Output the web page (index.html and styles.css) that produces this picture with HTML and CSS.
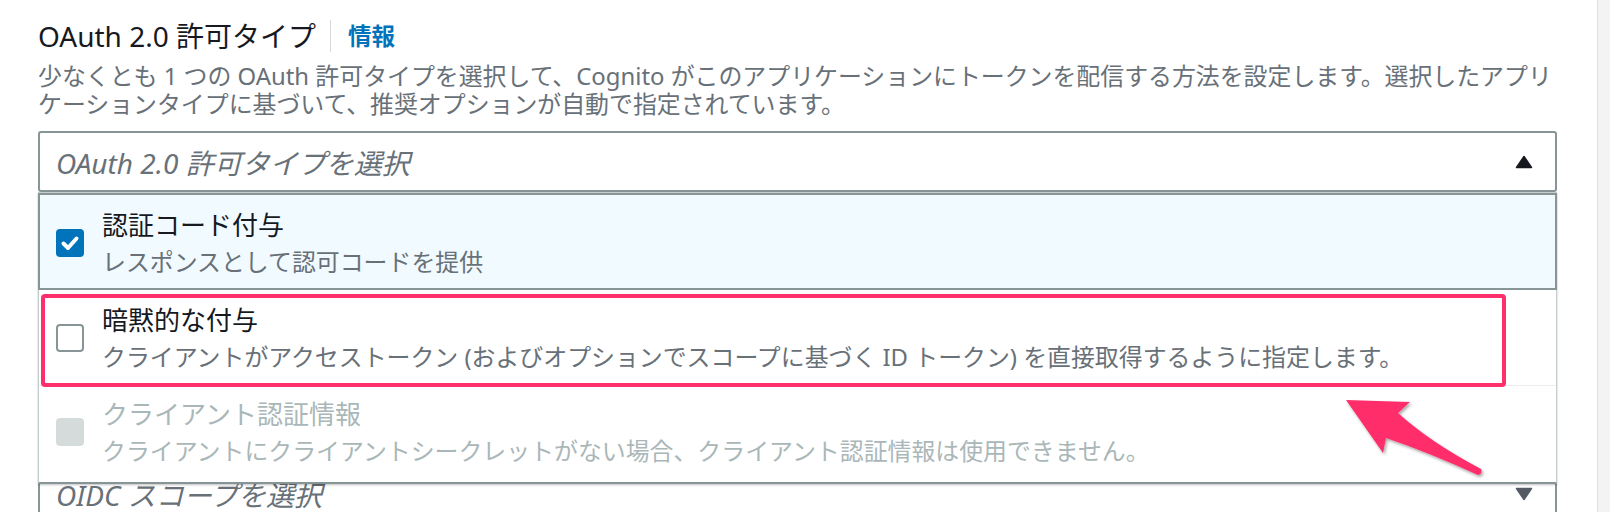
FILE: index.html
```html
<!DOCTYPE html>
<html lang="ja">
<head>
<meta charset="utf-8">
<title>OAuth 2.0 許可タイプ</title>
<link rel="stylesheet" href="styles.css">
</head>
<body>
<div class="page">
  <main class="content">
    <div class="label-row">
      <span class="title">OAuth 2.0 許可タイプ</span>
      <span class="sep"></span>
      <a class="info">情報</a>
    </div>
    <p class="desc">少なくとも 1 つの OAuth 許可タイプを選択して、Cognito がこのアプリケーションにトークンを配信する方法を設定します。選択したアプリケーションタイプに基づいて、推奨オプションが自動で指定されています。</p>

    <div class="select-wrap">
      <div class="select">
        <span class="placeholder">OAuth 2.0 許可タイプを選択</span>
        <svg class="caret" viewBox="0 0 18 14" width="18" height="14"><path d="M9 1.5 L16.5 12.5 L1.5 12.5 Z" fill="#16191f" stroke="#16191f" stroke-width="1.5" stroke-linejoin="round"/></svg>
      </div>
      <ul class="dropdown">
        <li class="option selected">
          <span class="check checked"><svg viewBox="0 0 28 28" width="28" height="28"><path d="M7.5 14.5 L12 19 L20.5 9.5" fill="none" stroke="#fff" stroke-width="4" stroke-linecap="round" stroke-linejoin="round"/></svg></span>
          <span class="text"><span class="opt-label">認証コード付与</span><span class="opt-desc">レスポンスとして認可コードを提供</span></span>
        </li>
        <li class="option highlighted">
          <span class="check"></span>
          <span class="text"><span class="opt-label">暗黙的な付与</span><span class="opt-desc">クライアントがアクセストークン (およびオプションでスコープに基づく ID トークン) を直接取得するように指定します。</span></span>
          <span class="mark"></span>
        </li>
        <li class="option disabled">
          <span class="check"></span>
          <span class="text"><span class="opt-label">クライアント認証情報</span><span class="opt-desc">クライアントにクライアントシークレットがない場合、クライアント認証情報は使用できません。</span></span>
        </li>
      </ul>
    </div>

    <div class="select second">
      <span class="placeholder">OIDC スコープを選択</span>
      <svg class="caret" viewBox="0 0 18 14" width="18" height="14"><path d="M1.5 1.5 L16.5 1.5 L9 12.5 Z" fill="#545b64" stroke="#545b64" stroke-width="1.5" stroke-linejoin="round"/></svg>
    </div>
  </main>
  <div class="scrollbar"></div>

  <svg class="arrow" viewBox="0 0 170 100" width="170" height="100">
    <defs>
      <filter id="sh" x="-20%" y="-20%" width="140%" height="140%">
        <feDropShadow dx="1.5" dy="2" stdDeviation="1.5" flood-color="#000" flood-opacity="0.35"/>
      </filter>
    </defs>
    <path filter="url(#sh)" fill="#ff2f6b" d="M16 10 L80 12 L68 23 Q100 52 151 79 Q153 84 148 85 Q100 63 56 48 L53 63 Z"/>
  </svg>
</div>
</body>
</html>
```

FILE: styles.css
```css
* { box-sizing: border-box; }
html, body { margin: 0; padding: 0; background: #fff; }
body {
  font-family: "Noto Sans", "Noto Sans CJK JP", sans-serif;
  color: #16191f;
}
.page {
  position: relative;
  display: flex;
  width: 1610px;
  height: 512px;
  overflow: hidden;
}
.content {
  flex: 1;
  padding: 18px 40px 0 38px;
}
.scrollbar {
  width: 13px;
  background: #f3f3f3;
  border-left: 1px solid #e0e0e0;
}
.label-row {
  display: flex;
  align-items: center;
  height: 36px;
}
.title {
  font-size: 28px;
  line-height: 36px;
  color: #16191f;
}
.sep {
  width: 1px;
  height: 32px;
  background: #d5dbdb;
  margin: 0 17px 0 14px;
}
.info {
  font-size: 23.5px;
  font-weight: 700;
  color: #0073bb;
  line-height: 36px;
}
.desc {
  margin: 8px -14px 0 0;
  font-size: 23.9px;
  line-height: 28px;
  color: #687078;
}
.select-wrap {
  position: relative;
  margin-top: 13px;
}
.select {
  display: flex;
  align-items: center;
  justify-content: space-between;
  height: 61px;
  padding: 0 22px 0 16px;
  border: 2px solid #879596;
  border-radius: 3px;
  background: #fff;
}
.placeholder {
  font-size: 28px;
  font-style: italic;
  color: #687078;
}
.caret { display: block; }
.second {
  margin-top: 271px;
}
.dropdown {
  position: absolute;
  top: 100%;
  left: 0;
  right: 0;
  z-index: 2;
  margin: 0;
  padding: 0;
  list-style: none;
  background: #fff;
  border: 1px solid #c6cdce;
  border-bottom: 2px solid #879596;
  box-shadow: 0 1px 2px rgba(0, 0, 0, 0.25);
}
.option {
  position: relative;
  display: flex;
  align-items: center;
  gap: 18px;
  padding: 11px 16px 10px 17px;
  border-bottom: 1px solid #eaeded;
}
.option.selected {
  background: #f1faff;
  border: 2px solid #879596;
  margin: 0 -1px;
  padding: 11px 16px 8px 16px;
}
.option.disabled { border-bottom: 0; padding-top: 9px; padding-bottom: 13px; }
.check {
  flex: none;
  width: 28px;
  height: 28px;
  border: 2px solid #879596;
  border-radius: 4px;
  background: #fff;
}
.check.checked {
  border: 0;
  background: #0073bb;
}
.check svg { display: block; }
.disabled .check {
  border: 0;
  background: #d5dbdb;
}
.text {
  display: flex;
  flex-direction: column;
}
.opt-label {
  font-size: 26px;
  line-height: 38px;
  color: #16191f;
}
.opt-desc {
  font-size: 23.9px;
  line-height: 36px;
  color: #687078;
}
.disabled .opt-label,
.disabled .opt-desc { color: #aab7b8; }
.mark {
  position: absolute;
  left: 2px;
  right: 50px;
  top: 4px;
  bottom: -2px;
  border: 4px solid #ff2f6b;
  border-radius: 4px;
  pointer-events: none;
}
.arrow {
  position: absolute;
  left: 1330px;
  top: 390px;
  z-index: 5;
  overflow: visible;
}
```
